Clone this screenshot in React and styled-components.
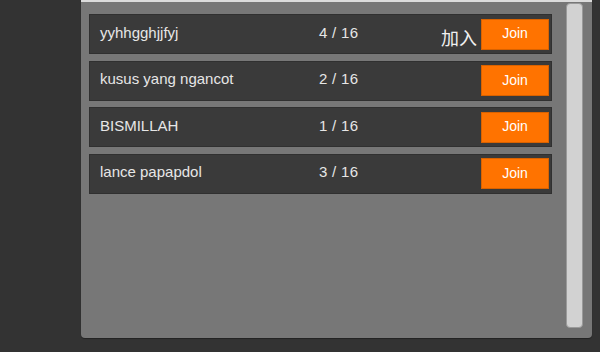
import React from 'react'
import styled, { createGlobalStyle } from 'styled-components'

const GlobalStyle = createGlobalStyle`
  html, body {
    margin: 0;
    padding: 0;
    background: #333333;
  }
  body {
    font-family: "Liberation Sans", "Noto Sans CJK SC", sans-serif;
  }
`;

const Screen = styled.div`
  width: 600px;
  height: 352px;
  display: flex;
  background: #333333;
  overflow: hidden;
`;

const Panel = styled.div`
  margin-left: 81px;
  width: 511px;
  height: 338px;
  box-sizing: border-box;
  display: flex;
  padding: 0 9px 0 8px;
  background: #777777;
  border-top: 2px solid #dcdcdc;
  border-radius: 0 0 4px 4px;
  box-shadow: 0 1px 1px rgba(0, 0, 0, 0.35);
`;

const RoomList = styled.div`
  width: 463px;
  padding-top: 12px;
  display: flex;
  flex-direction: column;
  gap: 6.5px;
`;

const Row = styled.div`
  height: 40px;
  box-sizing: border-box;
  display: flex;
  align-items: center;
  padding: 0 2px 0 10px;
  background: #3a3a3a;
  border: 1px solid #303030;
  color: #e6e6e6;
  font-size: 15px;
`;

const Name = styled.span`
  width: 219px;
  white-space: nowrap;
  margin-top: -4px;
`;

const Count = styled.span`
  flex: 1;
  margin-top: -4px;
  letter-spacing: 0.3px;
`;

const JoinLabel = styled.span`
  font-family: "Noto Sans CJK SC", sans-serif;
  font-size: 18px;
  color: #f0f0f0;
  margin: 6px 4px 0 0;
`;

const JoinButton = styled.button`
  width: 68px;
  height: 31px;
  box-sizing: border-box;
  background: #ff7300;
  border: 1px solid #d96200;
  color: #ffffff;
  font-family: "Liberation Sans", sans-serif;
  font-size: 14px;
  padding: 0 0 2px;
  cursor: pointer;
`;

const Scrollbar = styled.div`
  width: 17px;
  margin: 1px 0 10px 14px;
  box-sizing: border-box;
  background: #d2d2d2;
  border: 1px solid #9a9a9a;
  border-radius: 4px;
`;

const rooms = [
  { name: 'yyhhgghjjfyj', players: 4, label: '加入' },
  { name: 'kusus yang ngancot', players: 2 },
  { name: 'BISMILLAH', players: 1 },
  { name: 'lance papapdol', players: 3 },
];

export default function App() {
  return (
    <Screen>
      <GlobalStyle />
      <Panel>
        <RoomList>
          {rooms.map((room) => (
            <Row key={room.name}>
              <Name>{room.name}</Name>
              <Count>{room.players} / 16</Count>
              {room.label && <JoinLabel>{room.label}</JoinLabel>}
              <JoinButton>Join</JoinButton>
            </Row>
          ))}
        </RoomList>
        <Scrollbar />
      </Panel>
    </Screen>
  )
}
